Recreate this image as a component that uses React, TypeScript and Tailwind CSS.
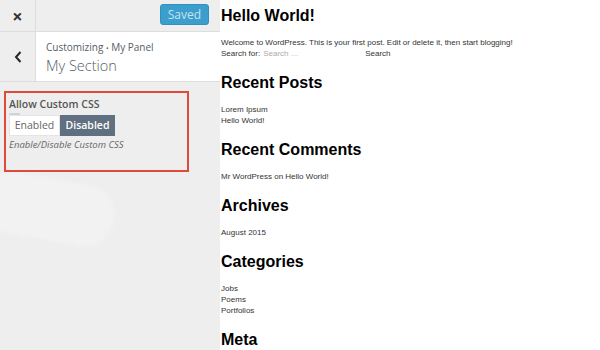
import React from 'react';

const sans = { fontFamily: '"Open Sans", "Noto Sans", sans-serif' };

function Sidebar() {
  return (
    <aside className="relative w-[220px] h-[350px] shrink-0 bg-[#eeeeee] overflow-hidden" style={sans}>
      {/* soft blob in the background */}
      <div className="absolute left-[-20px] top-[178px] w-[135px] h-[62px] rounded-full bg-[#f2f2f2] rotate-[10deg] blur-[2px]" />

      <div className="relative flex h-[32px] border-b border-[#dddddd]">
        <button className="w-[36px] h-full flex items-center justify-center border-r border-[#dddddd] text-[#333] text-[18px] font-bold leading-none">
          ×
        </button>
        <div className="flex-1 flex justify-end items-start pt-[4px] pr-[11px]">
          <div className="h-[21px] px-[7px] rounded-[3px] bg-[#3c9ecc] border border-[#3390bd] text-[#c6e3f1] text-[12px] leading-[19px]">
            Saved
          </div>
        </div>
      </div>

      <div className="relative flex h-[50px] border-b border-[#dddddd]">
        <div className="w-[36px] h-full flex items-center justify-center border-r border-[#dddddd]">
          <svg width="8" height="12" viewBox="0 0 8 12">
            <path d="M6.5 1 L2 6 L6.5 11" fill="none" stroke="#23282d" strokeWidth="2" />
          </svg>
        </div>
        <div className="flex-1 bg-white pl-[10px] pt-[9px]">
          <div className="text-[10px] leading-[13px] text-[#555d66]">
            Customizing <span className="text-[7px] align-middle">•</span> My Panel
          </div>
          <div className="text-[14.5px] leading-[21px] text-[#555d66] font-light">My Section</div>
        </div>
      </div>

      <div className="relative mx-[4px] mt-[9px] w-[185px] h-[81px] border-2 border-[#e04a3c] px-[3px] pt-[4px]">
        <div className="text-[10.5px] leading-[14px] font-semibold text-[#555]">Allow Custom CSS</div>
        <div className="mt-[2px] w-[11px] h-[2px] bg-[#d4d4d4]" />
        <div className="flex">
          <div className="w-[51px] h-[21px] bg-white border border-[#e4e4e4] text-[10.5px] leading-[19px] text-[#666] text-center">
            Enabled
          </div>
          <div className="w-[55px] h-[21px] bg-[#607080] text-[10.5px] leading-[21px] text-white text-center font-semibold">
            Disabled
          </div>
        </div>
        <div className="mt-[2px] text-[9.5px] leading-[13px] italic text-[#666]">Enable/Disable Custom CSS</div>
      </div>
    </aside>
  );
}

function Heading({ children, first }: { children: React.ReactNode; first?: boolean }) {
  return (
    <h2
      className={`text-[16px] leading-[22px] font-bold text-black ${first ? 'mt-[5px] mb-[10px]' : 'mt-[12.5px] mb-[10.5px]'}`}
    >
      {children}
    </h2>
  );
}

function Preview() {
  return (
    <main
      className="flex-1 h-[350px] bg-white pl-[1px] overflow-hidden text-[8px] leading-[11px] text-[#333]"
      style={{ fontFamily: '"Liberation Sans", Arial, sans-serif' }}
    >
      <Heading first>Hello World!</Heading>
      <p>Welcome to WordPress. This is your first post. Edit or delete it, then start blogging!</p>
      <div className="flex items-center">
        <span>Search for:</span>
        <span className="ml-[3px] w-[102px] text-[#aaa]">Search …</span>
        <span>Search</span>
      </div>
      <Heading>Recent Posts</Heading>
      <ul>
        <li>Lorem Ipsum</li>
        <li>Hello World!</li>
      </ul>
      <Heading>Recent Comments</Heading>
      <p>Mr WordPress on Hello World!</p>
      <Heading>Archives</Heading>
      <p>August 2015</p>
      <Heading>Categories</Heading>
      <ul>
        <li>Jobs</li>
        <li>Poems</li>
        <li>Portfolios</li>
      </ul>
      <Heading>Meta</Heading>
    </main>
  );
}

export default function App() {
  return (
    <div className="flex w-[600px] h-[350px] overflow-hidden">
      <Sidebar />
      <Preview />
    </div>
  );
}
